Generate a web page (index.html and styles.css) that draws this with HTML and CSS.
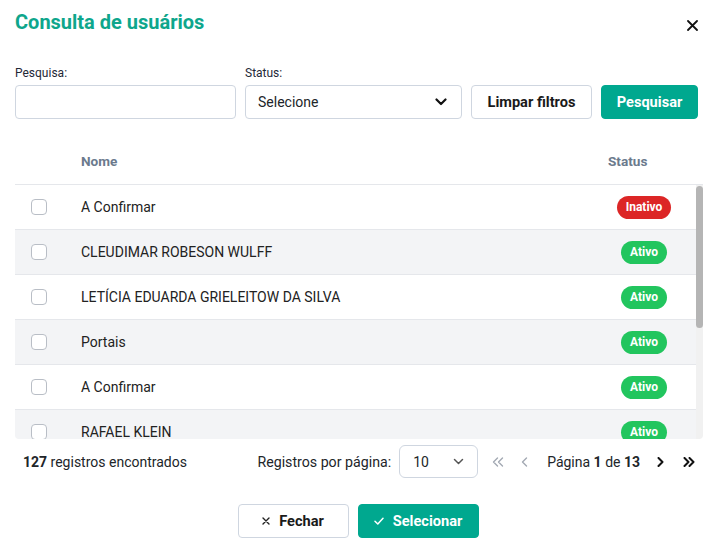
FILE: index.html
```html
<!DOCTYPE html>
<html lang="pt-BR">
<head>
<meta charset="utf-8">
<title>Consulta de usuários</title>
<link rel="stylesheet" href="styles.css">
</head>
<body>
<div class="modal">
  <div class="modal-header">
    <h1 class="title">Consulta de usuários</h1>
    <button class="close" aria-label="Fechar">
      <svg width="11" height="11" viewBox="0 0 11 11"><path d="M1 1 L10 10 M10 1 L1 10" stroke="#111" stroke-width="1.8" stroke-linecap="round"/></svg>
    </button>
  </div>

  <div class="filters">
    <div class="field field-search">
      <label class="label">Pesquisa:</label>
      <input class="input" type="text">
    </div>
    <div class="field field-status">
      <label class="label">Status:</label>
      <div class="select">
        <span>Selecione</span>
        <svg width="12" height="8" viewBox="0 0 12 8"><path d="M1.5 1.5 L6 6 L10.5 1.5" fill="none" stroke="#111" stroke-width="2.2" stroke-linecap="round" stroke-linejoin="round"/></svg>
      </div>
    </div>
    <button class="btn btn-outline btn-clear">Limpar filtros</button>
    <button class="btn btn-primary btn-search">Pesquisar</button>
  </div>

  <div class="table">
    <div class="thead">
      <div class="col-check"></div>
      <div class="col-name">Nome</div>
      <div class="col-status">Status</div>
    </div>
    <div class="tbody-wrap">
      <div class="tbody">
        <div class="row"><div class="col-check"><span class="checkbox"></span></div><div class="col-name">A Confirmar</div><div class="col-status"><span class="badge badge-red">Inativo</span></div></div>
        <div class="row"><div class="col-check"><span class="checkbox"></span></div><div class="col-name">CLEUDIMAR ROBESON WULFF</div><div class="col-status"><span class="badge badge-green">Ativo</span></div></div>
        <div class="row"><div class="col-check"><span class="checkbox"></span></div><div class="col-name">LETÍCIA EDUARDA GRIELEITOW DA SILVA</div><div class="col-status"><span class="badge badge-green">Ativo</span></div></div>
        <div class="row"><div class="col-check"><span class="checkbox"></span></div><div class="col-name">Portais</div><div class="col-status"><span class="badge badge-green">Ativo</span></div></div>
        <div class="row"><div class="col-check"><span class="checkbox"></span></div><div class="col-name">A Confirmar</div><div class="col-status"><span class="badge badge-green">Ativo</span></div></div>
        <div class="row"><div class="col-check"><span class="checkbox"></span></div><div class="col-name">RAFAEL KLEIN</div><div class="col-status"><span class="badge badge-green">Ativo</span></div></div>
        <div class="row"><div class="col-check"><span class="checkbox"></span></div><div class="col-name">MARCOS ANTONIO SOUZA</div><div class="col-status"><span class="badge badge-green">Ativo</span></div></div>
        <div class="row"><div class="col-check"><span class="checkbox"></span></div><div class="col-name">A Confirmar</div><div class="col-status"><span class="badge badge-green">Ativo</span></div></div>
        <div class="row"><div class="col-check"><span class="checkbox"></span></div><div class="col-name">JULIANA PEREIRA LIMA</div><div class="col-status"><span class="badge badge-green">Ativo</span></div></div>
        <div class="row"><div class="col-check"><span class="checkbox"></span></div><div class="col-name">Portais</div><div class="col-status"><span class="badge badge-green">Ativo</span></div></div>
      </div>
      <div class="scrollbar"><div class="thumb"></div></div>
    </div>
  </div>

  <div class="pager">
    <div class="count"><b>127</b> registros encontrados</div>
    <div class="pager-right">
      <span class="per-page">Registros por página:</span>
      <div class="select select-small">
        <span>10</span>
        <svg width="11" height="7" viewBox="0 0 11 7"><path d="M1.5 1.5 L5.5 5.5 L9.5 1.5" fill="none" stroke="#555" stroke-width="1.5" stroke-linecap="round" stroke-linejoin="round"/></svg>
      </div>
      <span class="nav nav-first">
        <svg width="12" height="10" viewBox="0 0 12 10"><path d="M5.5 1 L1.5 5 L5.5 9 M10.5 1 L6.5 5 L10.5 9" fill="none" stroke="#a3a9b3" stroke-width="1.4" stroke-linecap="round" stroke-linejoin="round"/></svg>
      </span>
      <span class="nav nav-prev">
        <svg width="7" height="10" viewBox="0 0 7 10"><path d="M5.5 1 L1.5 5 L5.5 9" fill="none" stroke="#a3a9b3" stroke-width="1.4" stroke-linecap="round" stroke-linejoin="round"/></svg>
      </span>
      <span class="page-info">Página <b>1</b> de <b>13</b></span>
      <span class="nav nav-next">
        <svg width="7" height="10" viewBox="0 0 7 10"><path d="M1.5 1 L5.5 5 L1.5 9" fill="none" stroke="#111" stroke-width="2" stroke-linecap="round" stroke-linejoin="round"/></svg>
      </span>
      <span class="nav nav-last">
        <svg width="12" height="10" viewBox="0 0 12 10"><path d="M1.5 1 L5.5 5 L1.5 9 M6.5 1 L10.5 5 L6.5 9" fill="none" stroke="#111" stroke-width="2" stroke-linecap="round" stroke-linejoin="round"/></svg>
      </span>
    </div>
  </div>

  <div class="actions">
    <button class="btn btn-outline btn-close">
      <svg width="8" height="8" viewBox="0 0 8 8"><path d="M1 1 L7 7 M7 1 L1 7" stroke="#222" stroke-width="1.4" stroke-linecap="round"/></svg>
      Fechar
    </button>
    <button class="btn btn-primary btn-select">
      <svg width="10" height="8" viewBox="0 0 10 8"><path d="M1 4.2 L3.8 7 L9 1.2" fill="none" stroke="#fff" stroke-width="1.5" stroke-linecap="round" stroke-linejoin="round"/></svg>
      Selecionar
    </button>
  </div>
</div>
</body>
</html>
```

FILE: styles.css
```css
* { box-sizing: border-box; }

html, body {
  margin: 0;
  padding: 0;
  background: #fff;
}

body {
  font-family: Roboto, "Liberation Sans", Arial, sans-serif;
  color: #212529;
  font-size: 14px;
}

.modal {
  width: 714px;
  padding: 8px 11px 8px 15px;
}

.modal-header {
  display: flex;
  align-items: center;
  justify-content: space-between;
  height: 28px;
}

.title {
  margin: 0;
  font-size: 20px;
  line-height: 28px;
  font-weight: 700;
  color: #0ea68c;
}

.close {
  border: 0;
  background: none;
  padding: 0;
  margin: 6px 5px 0 0;
  width: 11px;
  height: 11px;
  display: flex;
}

.filters {
  display: flex;
  align-items: flex-end;
  gap: 9px;
  margin-top: 29px;
  padding-right: 5px;
}

.field {
  display: flex;
  flex-direction: column;
  gap: 4px;
}

.field-search { width: 221px; }
.field-status { width: 217px; }

.label {
  font-size: 12px;
  line-height: 16px;
  color: #1f2937;
}

.input,
.select {
  height: 34px;
  border: 1px solid #cfd6e0;
  border-radius: 4px;
  background: #fff;
  font-family: inherit;
  font-size: 14px;
}

.select {
  display: flex;
  align-items: center;
  justify-content: space-between;
  padding: 0 14px 0 12px;
  color: #212529;
}

.btn {
  height: 34px;
  border-radius: 4px;
  font-family: inherit;
  font-size: 14.6px;
  font-weight: 700;
  display: inline-flex;
  align-items: center;
  justify-content: center;
  gap: 9px;
  padding: 0;
}

.btn-outline {
  background: #fff;
  border: 1px solid #cfd6e0;
  color: #1a1a1a;
}

.btn-primary {
  background: #00a88f;
  border: 1px solid #00a88f;
  color: #fff;
}

.btn-clear { width: 121px; }
.btn-search { width: 97px; }

.table {
  margin-top: 20px;
  width: 688px;
}

.thead {
  display: flex;
  align-items: center;
  height: 46px;
  padding-bottom: 2px;
  border-bottom: 1px solid #e5e7eb;
  padding-right: 23px;
  font-size: 13.6px;
  font-weight: 700;
  color: #6b7a8d;
}

.col-check {
  width: 66px;
  flex: none;
  padding-left: 16px;
  display: flex;
  align-items: center;
}

.col-name { flex: 1; }

.col-status {
  width: 72px;
  flex: none;
  display: flex;
  justify-content: center;
}

.thead .col-status { justify-content: flex-start; }

.tbody-wrap {
  display: flex;
  height: 254px;
  border-bottom-left-radius: 4px;
  border-bottom-right-radius: 4px;
  overflow: hidden;
}

.tbody {
  flex: 1;
  overflow: hidden;
}

.scrollbar {
  width: 7px;
  flex: none;
  background: #f1f1f1;
  padding-top: 1px;
}

.thumb {
  height: 142px;
  background: #b5b5b5;
  border-radius: 4px;
}

.row {
  display: flex;
  align-items: center;
  height: 45px;
  border-bottom: 1px solid #e5e7eb;
  padding-right: 16px;
  font-size: 14px;
  color: #222;
}

.row:nth-child(even) { background: #f3f4f6; }

.checkbox {
  width: 16px;
  height: 16px;
  border: 1px solid #b9bec6;
  border-radius: 4px;
  background: #fff;
  display: block;
}

.badge {
  height: 23px;
  line-height: 23px;
  padding: 0 9px;
  border-radius: 12px;
  color: #fff;
  font-size: 12px;
  font-weight: 700;
}

.badge-red { background: #dc2626; }
.badge-green { background: #22c55e; }

.pager {
  display: flex;
  align-items: center;
  justify-content: space-between;
  margin-top: 6px;
  padding-left: 8px;
  padding-right: 8px;
  height: 33px;
  font-size: 14px;
  color: #212529;
}

.count b { font-weight: 700; }

.pager-right {
  display: flex;
  align-items: center;
}

.per-page { margin-right: 8px; font-size: 14.2px; }

.select-small {
  width: 79px;
  height: 33px;
  border-radius: 6px;
  padding: 0 13px 0 13px;
  margin-right: 14px;
}

.nav {
  display: flex;
  align-items: center;
  justify-content: center;
}

.nav-first { width: 12px; margin-right: 17px; }
.nav-prev { width: 7px; margin-right: 19px; }
.nav-next { width: 7px; margin-left: 17px; margin-right: 19px; }
.nav-last { width: 12px; }

.page-info b { font-weight: 700; }

.actions {
  display: flex;
  justify-content: center;
  gap: 9px;
  margin-top: 26px;
  margin-left: -2px;
}

.btn-close { width: 111px; }
.btn-select { width: 121px; }
```
